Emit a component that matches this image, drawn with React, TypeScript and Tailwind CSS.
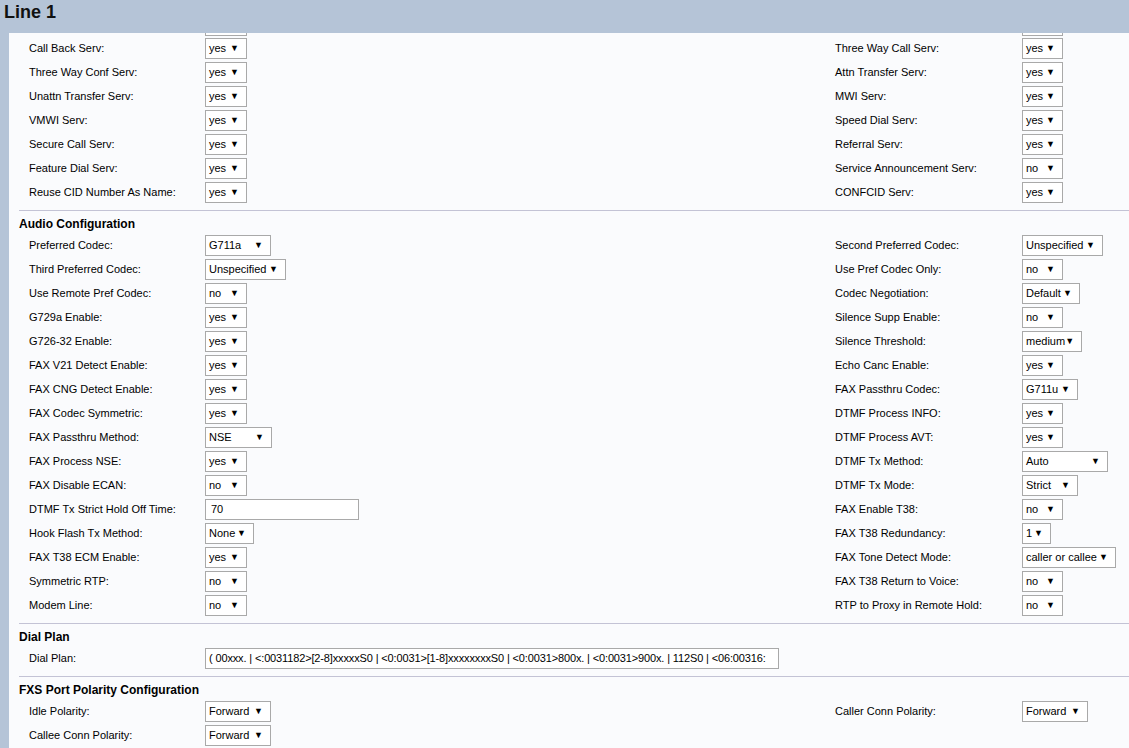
import React from "react";

type Field =
  | { kind: "select"; value: string; w: string }
  | { kind: "input"; value: string; w: string };

type Row = {
  left?: [string, Field];
  right?: [string, Field];
};

const sel = (value: string, w: string): Field => ({ kind: "select", value, w });
const inp = (value: string, w: string): Field => ({ kind: "input", value, w });

const L_YES = "w-[42px]";
const R_YES = "w-[41px]";

const services: Row[] = [
  { left: ["Call Back Serv:", sel("yes", L_YES)], right: ["Three Way Call Serv:", sel("yes", R_YES)] },
  { left: ["Three Way Conf Serv:", sel("yes", L_YES)], right: ["Attn Transfer Serv:", sel("yes", R_YES)] },
  { left: ["Unattn Transfer Serv:", sel("yes", L_YES)], right: ["MWI Serv:", sel("yes", R_YES)] },
  { left: ["VMWI Serv:", sel("yes", L_YES)], right: ["Speed Dial Serv:", sel("yes", R_YES)] },
  { left: ["Secure Call Serv:", sel("yes", L_YES)], right: ["Referral Serv:", sel("yes", R_YES)] },
  { left: ["Feature Dial Serv:", sel("yes", L_YES)], right: ["Service Announcement Serv:", sel("no", R_YES)] },
  { left: ["Reuse CID Number As Name:", sel("yes", L_YES)], right: ["CONFCID Serv:", sel("yes", R_YES)] },
];

const audio: Row[] = [
  { left: ["Preferred Codec:", sel("G711a", "w-[66px]")], right: ["Second Preferred Codec:", sel("Unspecified", "w-[81px]")] },
  { left: ["Third Preferred Codec:", sel("Unspecified", "w-[81px]")], right: ["Use Pref Codec Only:", sel("no", R_YES)] },
  { left: ["Use Remote Pref Codec:", sel("no", L_YES)], right: ["Codec Negotiation:", sel("Default", "w-[58px]")] },
  { left: ["G729a Enable:", sel("yes", L_YES)], right: ["Silence Supp Enable:", sel("no", R_YES)] },
  { left: ["G726-32 Enable:", sel("yes", L_YES)], right: ["Silence Threshold:", sel("medium", "w-[60px]")] },
  { left: ["FAX V21 Detect Enable:", sel("yes", L_YES)], right: ["Echo Canc Enable:", sel("yes", R_YES)] },
  { left: ["FAX CNG Detect Enable:", sel("yes", L_YES)], right: ["FAX Passthru Codec:", sel("G711u", "w-[56px]")] },
  { left: ["FAX Codec Symmetric:", sel("yes", L_YES)], right: ["DTMF Process INFO:", sel("yes", R_YES)] },
  { left: ["FAX Passthru Method:", sel("NSE", "w-[67px]")], right: ["DTMF Process AVT:", sel("yes", R_YES)] },
  { left: ["FAX Process NSE:", sel("yes", L_YES)], right: ["DTMF Tx Method:", sel("Auto", "w-[86px]")] },
  { left: ["FAX Disable ECAN:", sel("no", L_YES)], right: ["DTMF Tx Mode:", sel("Strict", "w-[56px]")] },
  { left: ["DTMF Tx Strict Hold Off Time:", inp("70", "w-[154px]")], right: ["FAX Enable T38:", sel("no", R_YES)] },
  { left: ["Hook Flash Tx Method:", sel("None", "w-[49px]")], right: ["FAX T38 Redundancy:", sel("1", "w-[29px]")] },
  { left: ["FAX T38 ECM Enable:", sel("yes", L_YES)], right: ["FAX Tone Detect Mode:", sel("caller or callee", "w-[94px]")] },
  { left: ["Symmetric RTP:", sel("no", L_YES)], right: ["FAX T38 Return to Voice:", sel("no", R_YES)] },
  { left: ["Modem Line:", sel("no", L_YES)], right: ["RTP to Proxy in Remote Hold:", sel("no", R_YES)] },
];

const dialPlan: Row[] = [
  {
    left: [
      "Dial Plan:",
      inp(
        "( 00xxx. | <:0031182>[2-8]xxxxxS0 | <0:0031>[1-8]xxxxxxxxS0 | <0:0031>800x. | <0:0031>900x. | 112S0 | <06:00316:",
        "w-[574px]"
      ),
    ],
  },
];

const polarity: Row[] = [
  { left: ["Idle Polarity:", sel("Forward", "w-[66px]")], right: ["Caller Conn Polarity:", sel("Forward", "w-[66px]")] },
  { left: ["Callee Conn Polarity:", sel("Forward", "w-[66px]")] },
];

function Control({ field }: { field: Field }) {
  if (field.kind === "input") {
    const long = field.value.length > 10;
    return (
      <div
        className={`${field.w} h-[21px] border border-[#a9a9a9] bg-white ${long ? "pl-[3px]" : "pl-[5px]"} flex items-center overflow-hidden whitespace-nowrap`}
      >
        <span className={long ? "text-[11px] tracking-[-0.14px]" : ""}>{field.value}</span>
      </div>
    );
  }
  return (
    <div
      className={`${field.w} h-[21px] border border-[#a9a9a9] bg-white pl-[3px] pr-[7px] flex items-center justify-between whitespace-nowrap`}
    >
      <span>{field.value}</span>
      <span className="text-[9px] leading-none">▼</span>
    </div>
  );
}

function Rows({ rows }: { rows: Row[] }) {
  return (
    <div className="pl-[10px]">
      {rows.map((r, i) => (
        <div key={i} className="grid grid-cols-[176px_630px_187px_1fr] h-[24px] items-center">
          <div>{r.left?.[0]}</div>
          <div>{r.left && <Control field={r.left[1]} />}</div>
          <div>{r.right?.[0]}</div>
          <div>{r.right && <Control field={r.right[1]} />}</div>
        </div>
      ))}
    </div>
  );
}

function Section({ title, rows }: { title: string; rows: Row[] }) {
  return (
    <div className="border-t border-[#c3c3d5] pt-[6px] pb-[6px]">
      <div className="font-bold text-[12px] leading-[14px] mb-[2px]">{title}</div>
      <Rows rows={rows} />
    </div>
  );
}

export default function App() {
  return (
    <div
      className="w-[1129px] h-[748px] overflow-hidden bg-[#b5c4d7] text-[11px] text-black flex flex-col"
      style={{ fontFamily: '"Liberation Sans", Arial, sans-serif' }}
    >
      <div className="h-[33px] shrink-0 pl-[4px] pt-[1px] text-[18px] font-bold leading-[22px] text-[#111]">
        Line 1
      </div>
      <div className="flex-1 ml-[9px] bg-[#fafbfd] overflow-hidden pl-[10px]">
        {/* bottom edge of the row scrolled out of view */}
        <div className="pl-[10px] grid grid-cols-[176px_630px_187px_1fr] h-[3px] items-end">
          <div />
          <div className="w-[42px] h-[3px] border-x border-b border-[#a9a9a9] bg-white" />
          <div />
          <div className="w-[41px] h-[3px] border-x border-b border-[#a9a9a9] bg-white" />
        </div>
        <div className="pb-[6px]">
          <Rows rows={services} />
        </div>
        <Section title="Audio Configuration" rows={audio} />
        <Section title="Dial Plan" rows={dialPlan} />
        <Section title="FXS Port Polarity Configuration" rows={polarity} />
        <div className="border-t border-[#c3c3d5]" />
      </div>
    </div>
  );
}
